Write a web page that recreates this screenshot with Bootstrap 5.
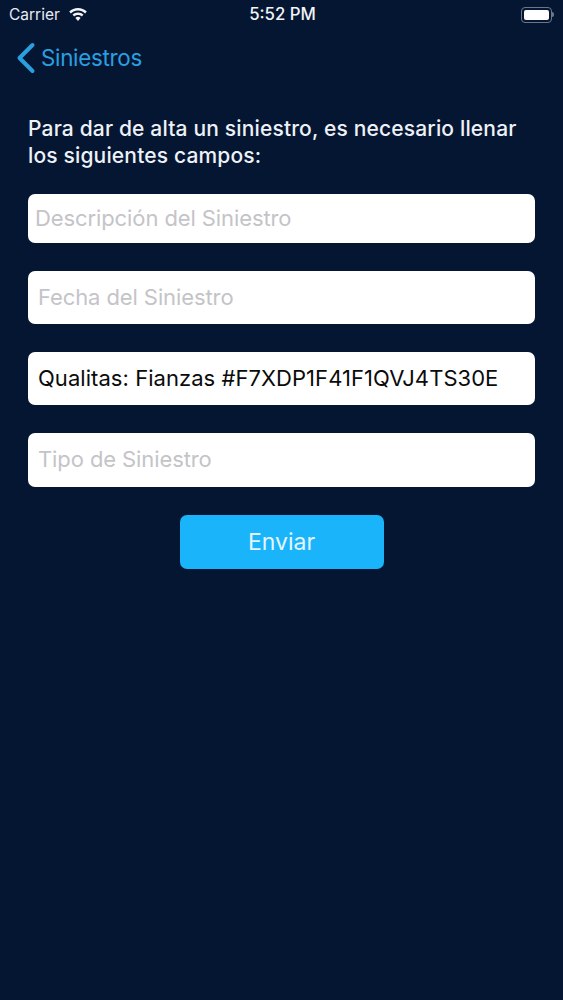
<!DOCTYPE html>
<html lang="es">
<head>
<meta charset="utf-8">
<title>Siniestros</title>
<link href="https://cdn.jsdelivr.net/npm/bootstrap@5.3.0/dist/css/bootstrap.min.css" rel="stylesheet">
<style>
html,body{height:100%}
body{background:#051633;font-family:Inter,"Liberation Sans",sans-serif;color:#fff;width:563px;height:1000px;overflow:hidden}
.statusrow{height:29px;padding:0 9px 0 9px;font-size:15.5px;color:#e8ecf2}
.statusside{width:150px}
.clock{font-weight:500;font-size:16.8px;color:#f2f4f7;padding-left:2px}
.batt{width:31px;height:16px;border:1px solid #6b7688;border-radius:4px;padding:2px}
.battfill{background:#fff;border-radius:2px;height:100%}
.battcap{width:2px;height:5px;background:#6b7688;border-radius:0 2px 2px 0}
.backrow{height:58px;padding-left:16px;color:#2a9fe0;font-size:22.4px;letter-spacing:-.3px;text-decoration:none}
.backrow span{margin-left:1px}
.intro{margin:28px 28px 0;font-size:21px;line-height:27px;font-weight:500;color:#eef2f7;letter-spacing:.16px}
.fields{margin:25px 28px 0}
.fields .form-control{border:0;border-radius:7px;font-size:22px;letter-spacing:.05px;color:#0b0b0b;padding:0 10px 2px;box-shadow:none}
.fields .form-control::placeholder{color:#c4c4c8;opacity:1;letter-spacing:-.1px}
.f1{height:49px;margin-bottom:28px;padding-left:7px!important}
.f2{height:53px;margin-bottom:28px}
.f3{height:54px;margin-bottom:28px}
.sendbtn{width:204px;height:54px;background:#1ab4fb;border:0;border-radius:7px;color:#e6f5fd;font-size:23px;font-weight:400;margin-top:28px}
.sendbtn:hover{background:#1ab4fb;color:#e6f5fd}
</style>
</head>
<body>
<div class="d-flex align-items-center justify-content-between statusrow">
  <div class="d-flex align-items-center gap-2 statusside">
    <span>Carrier</span>
    <svg width="20" height="15" viewBox="0 0 18 14" aria-hidden="true"><path d="M9 1C5.800 1 3 2.200 .8 4.300l1.500 1.700C4.100 4.300 6.400 3.300 9 3.300s4.900 1 6.700 2.700l1.500-1.700C15 2.200 12.200 1 9 1z" fill="#f2f4f7"/><path d="M9 5.100c-2 0-3.800.8-5.100 2l1.500 1.700C6.300 7.900 7.600 7.400 9 7.400s2.700.5 3.600 1.400l1.500-1.700c-1.300-1.200-3.100-2-5.100-2z" fill="#f2f4f7"/><path d="M9 9.200c-1 0-1.800.4-2.400 1L9 13l2.400-2.800c-.6-.6-1.400-1-2.400-1z" fill="#f2f4f7"/></svg>
  </div>
  <span class="clock">5:52 PM</span>
  <div class="d-flex align-items-center justify-content-end statusside">
    <div class="batt"><div class="battfill"></div></div><div class="battcap"></div>
  </div>
</div>
<a href="#" class="d-flex align-items-center gap-1 backrow">
  <svg width="20" height="32" viewBox="0 0 20 32" aria-hidden="true"><path d="M16.500 3 3.500 16 16.500 29" fill="none" stroke="#2a9fe0" stroke-width="4" stroke-linecap="round" stroke-linejoin="round"/></svg>
  <span>Siniestros</span>
</a>
<p class="intro">Para dar de alta un siniestro, es necesario llenar los siguientes campos:</p>
<form class="fields d-flex flex-column">
  <input class="form-control f1" type="text" placeholder="Descripción del Siniestro" aria-label="Descripción del Siniestro">
  <input class="form-control f2" type="text" placeholder="Fecha del Siniestro" aria-label="Fecha del Siniestro">
  <input class="form-control f2" type="text" value="Qualitas: Fianzas #F7XDP1F41F1QVJ4TS30E" aria-label="Referencia">
  <input class="form-control f3 mb-0" type="text" placeholder="Tipo de Siniestro" aria-label="Tipo de Siniestro">
  <button type="button" class="btn sendbtn align-self-center">Enviar</button>
</form>
<script src="https://cdn.jsdelivr.net/npm/bootstrap@5.3.0/dist/js/bootstrap.bundle.min.js"></script>
</body>
</html>
